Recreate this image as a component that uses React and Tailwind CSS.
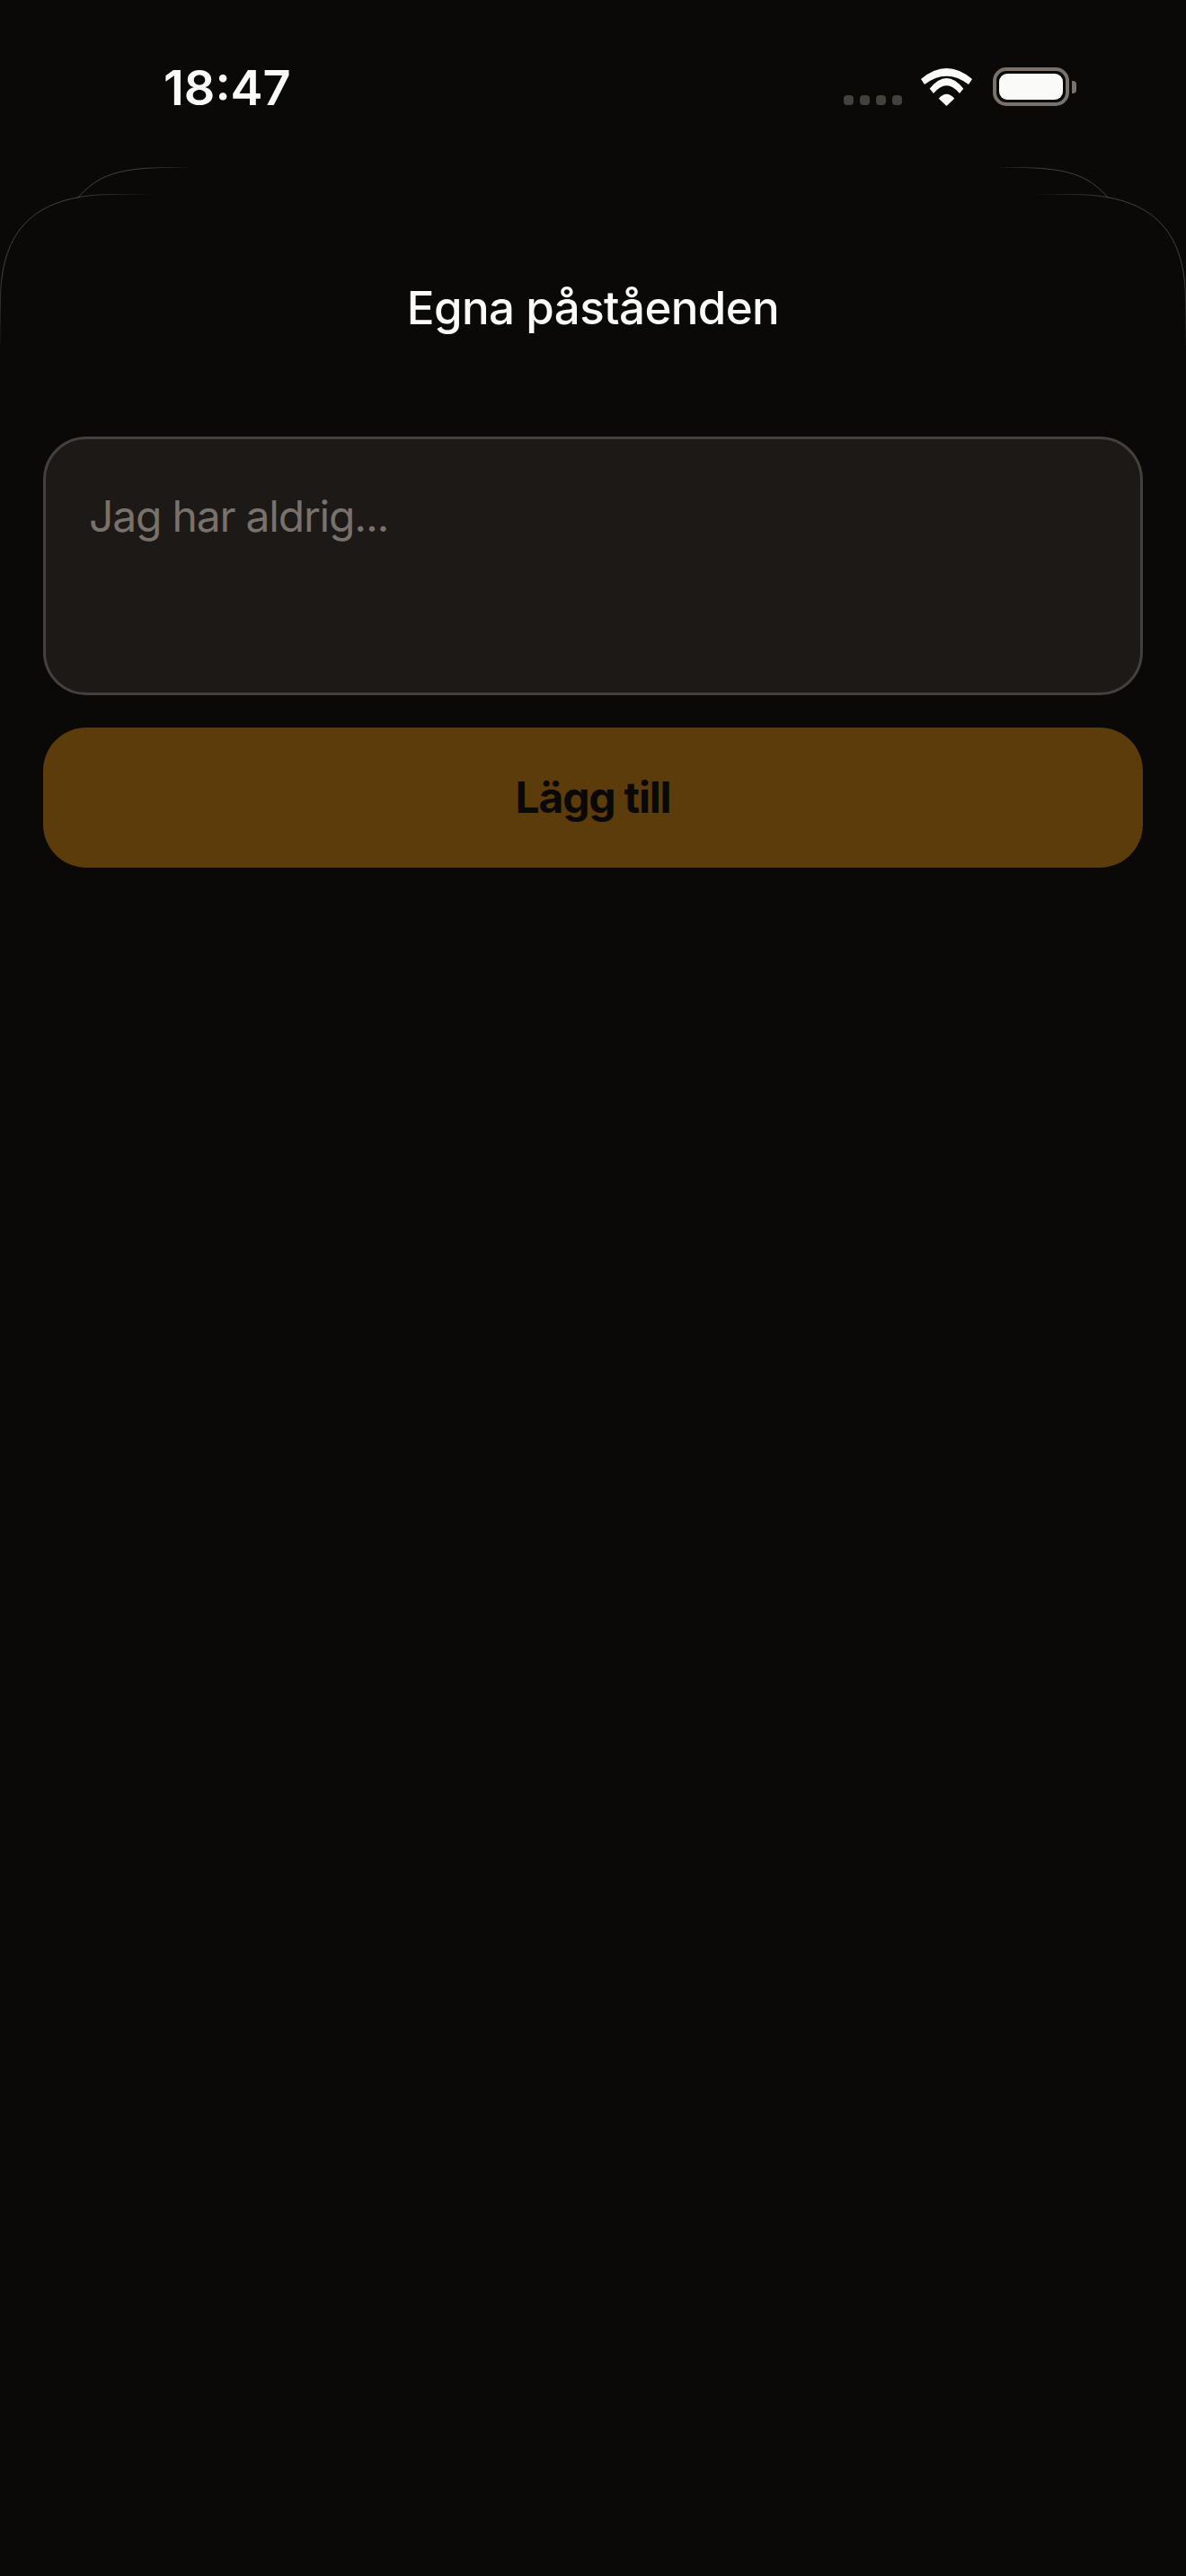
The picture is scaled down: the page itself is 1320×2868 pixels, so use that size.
const inter = "font-['Inter',sans-serif]";

const WifiIcon = () => (
  <svg width="58" height="42" viewBox="0 0 58 42" fill="#fafaf9">
    <path d="M0 12Q28.5-12 57 12L53 18Q28.5-.6 4 18Z" />
    <path d="M9.7 22.7Q28.5-.7 47.3 22.7L43 28Q28.5 10.6 14 28Z" />
    <path d="M19.7 33.7Q28.5 23.7 37.3 33.7L28.5 42Z" />
  </svg>
);

const Battery = () => (
  <div className="flex items-center gap-[3px]">
    <div className="flex h-[43px] w-[85px] items-center justify-center rounded-[15px] border-[4px] border-[#78716c]">
      <div className="h-[29px] w-[71px] rounded-[9px] bg-[#fafaf9]" />
    </div>
    <div className="h-[14px] w-[5px] rounded-r-[4px] bg-[#78716c]" />
  </div>
);

const StatusBar = () => (
  <div className="flex h-[186px] items-start justify-between pl-[182px] pr-[122px] pt-[65px]">
    <span className="text-[54px] font-semibold leading-[66px] text-[#fafaf9]">18:47</span>
    <div className="flex items-end pt-[10px]">
      <div className="mb-[1px] flex gap-[7px]">
        <span className="h-[11px] w-[11px] rounded-[4px] bg-[#44403c]" />
        <span className="h-[11px] w-[11px] rounded-[4px] bg-[#44403c]" />
        <span className="h-[11px] w-[11px] rounded-[4px] bg-[#44403c]" />
        <span className="h-[11px] w-[11px] rounded-[4px] bg-[#44403c]" />
      </div>
      <div className="ml-[21px] mr-[22px]">
        <WifiIcon />
      </div>
      <Battery />
    </div>
  </div>
);

// outlines of the stacked sheets, they fade out at both ends
const SheetEdges = () => (
  <svg className="pointer-events-none absolute left-0 top-0" width="1320" height="400" viewBox="0 0 1320 400" fill="none" strokeWidth="1">
    <defs>
      <linearGradient id="frontLeft" gradientUnits="userSpaceOnUse" x1="0" y1="390" x2="170" y2="216">
        <stop offset="0" stopColor="#44403c" stopOpacity="0" />
        <stop offset="0.25" stopColor="#44403c" />
        <stop offset="0.75" stopColor="#44403c" />
        <stop offset="1" stopColor="#44403c" stopOpacity="0" />
      </linearGradient>
      <linearGradient id="backLeft" gradientUnits="userSpaceOnUse" x1="86" y1="221" x2="214" y2="186">
        <stop offset="0" stopColor="#44403c" />
        <stop offset="0.6" stopColor="#44403c" />
        <stop offset="1" stopColor="#44403c" stopOpacity="0" />
      </linearGradient>
      <linearGradient id="frontRight" gradientUnits="userSpaceOnUse" x1="1320" y1="390" x2="1150" y2="216">
        <stop offset="0" stopColor="#44403c" stopOpacity="0" />
        <stop offset="0.25" stopColor="#44403c" />
        <stop offset="0.75" stopColor="#44403c" />
        <stop offset="1" stopColor="#44403c" stopOpacity="0" />
      </linearGradient>
      <linearGradient id="backRight" gradientUnits="userSpaceOnUse" x1="1234" y1="221" x2="1106" y2="186">
        <stop offset="0" stopColor="#44403c" />
        <stop offset="0.6" stopColor="#44403c" />
        <stop offset="1" stopColor="#44403c" stopOpacity="0" />
      </linearGradient>
    </defs>
    <path stroke="url(#frontLeft)" d="M.5 387V335C.5 265 30 216 127 216.500H170" />
    <path stroke="url(#backLeft)" d="M86 221C108 195 132 186.500 190 186.500H214" />
    <path stroke="url(#frontRight)" d="M1319.500 387V335C1319.500 265 1290 216 1193 216.500H1150" />
    <path stroke="url(#backRight)" d="M1234 221C1212 195 1188 186.500 1130 186.500H1106" />
  </svg>
);

export default function App() {
  return (
    <div className={`relative min-h-screen bg-[#0a0908] ${inter}`}>
      <SheetEdges />
      <StatusBar />
      <h1 className="mt-[121px] text-center text-[51px] font-medium leading-[72px] tracking-[-0.6px] text-[#fafaf9]">Egna påståenden</h1>
      <div className="mt-[107px] flex flex-col gap-[36px] px-[48px]">
        <textarea
          readOnly
          placeholder="Jag har aldrig..."
          className="h-[288px] w-full resize-none rounded-[48px] border-[3px] border-[#44403c] bg-[#1c1917] px-[48px] pt-[57px] text-[48px] font-normal leading-[58px] tracking-[-1.2px] placeholder:text-[#78716c]"
        />
        <button className="h-[156px] w-full rounded-[48px] bg-[#5c3c0a] text-[48px] font-bold tracking-[-1.2px] text-[#0a0908]">Lägg till</button>
      </div>
    </div>
  );
}
